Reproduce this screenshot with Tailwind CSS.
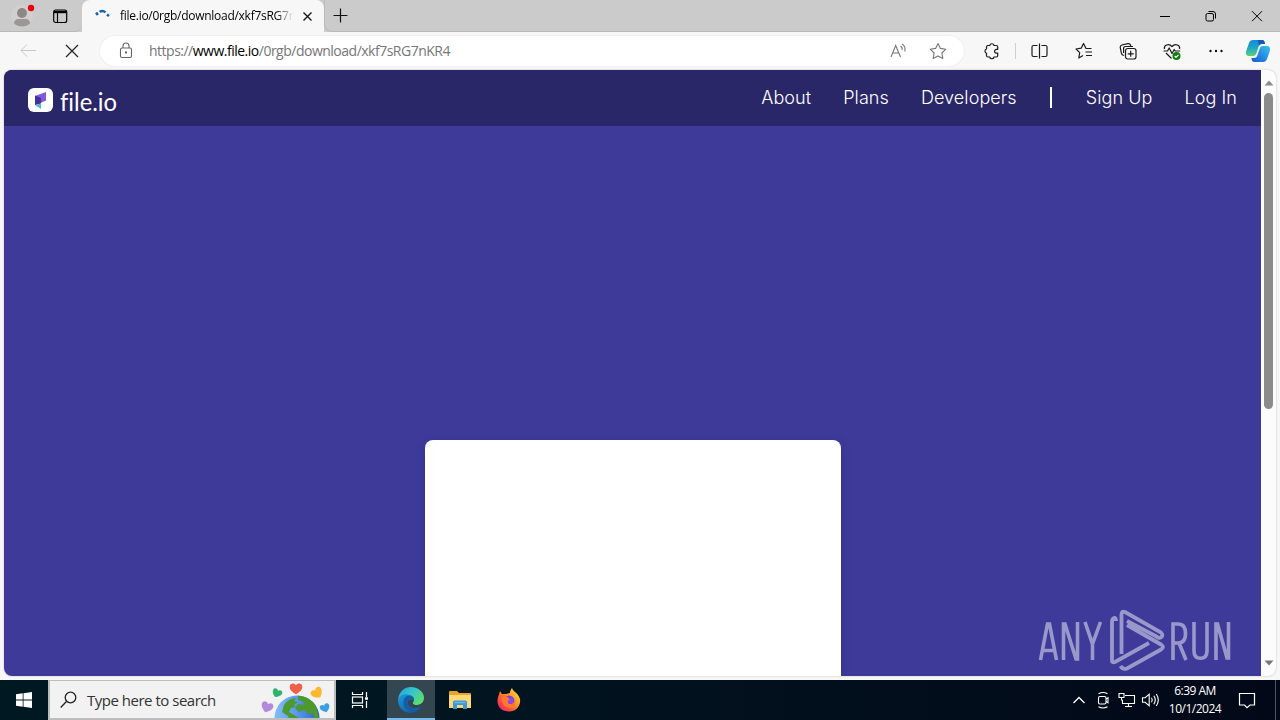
<!DOCTYPE html>
<html lang="en">
<head>
  <meta charset="UTF-8" />
  <meta name="viewport" content="width=device-width, initial-scale=1.0"/>
  <title>file.io</title>
  <script src="https://cdn.jsdelivr.net/npm/@tailwindcss/browser@4"></script>
</head>
<body class="flex h-screen w-screen flex-col overflow-hidden bg-[#f7f7f7] font-['Open_Sans','Noto_Sans',sans-serif] text-black">

  <!-- Tab strip -->
  <div class="flex h-8 shrink-0 items-stretch bg-[#cbcbcb]">
    <div class="flex w-[82px] items-center rounded-br-lg border-b border-[#b9b9b9] pl-2.5">
      <svg class="h-6 w-7 shrink-0" viewBox="10 4 28 24">
        <circle cx="22" cy="16" r="11" fill="#d2d0ce"/>
        <circle cx="22" cy="13" r="5" fill="#8c8885"/>
        <path d="M14 23.500c0-3 2-4.500 4-4.500h8c2 0 4 1.500 4 4.500-2 2-5 3-8 3s-6-1-8-3z" fill="#9b9794"/>
        <circle cx="31" cy="8" r="3.200" fill="#e3000f"/>
      </svg>
      <svg class="ml-3.5 h-4 w-4 shrink-0" viewBox="0 0 16 16" fill="none" stroke="#000" stroke-width="1.200">
        <rect x="1.700" y="2" width="13" height="12.500" rx="2"/>
        <path d="M2 4h12.500" stroke-width="2.400"/>
        <path d="M5.500 4v10"/>
      </svg>
    </div>
    <div class="flex w-[242px] items-center rounded-t-lg bg-[#f7f7f7] pl-3">
      <svg class="h-4 w-4 shrink-0" viewBox="0 0 16 16" fill="none" stroke="#1763a6">
        <path d="M2 6.500l2-1.500" stroke-width="3"/>
        <path d="M5.500 3.700c2-1 4-1 6 .6" stroke-width="2.300"/>
        <path d="M13 6.500l2 1.500" stroke-width="2.500"/>
      </svg>
      <span class="ml-2.5 w-[173px] overflow-hidden whitespace-nowrap bg-linear-to-r from-black from-90% to-transparent bg-clip-text text-xs leading-5 tracking-[-0.270px] text-transparent">file.io/0rgb/download/xkf7sRG7nKR4</span>
      <svg class="ml-2 h-3 w-3 shrink-0" viewBox="0 0 12 12" stroke="#111" stroke-width="1.300"><path d="M2.500 2.500l8 8M10.500 2.500l-8 8"/></svg>
    </div>
    <div class="flex flex-1 items-center rounded-bl-lg border-b border-l border-[#b9b9b9]">
      <svg class="ml-2 h-4 w-4" viewBox="0 0 16 16" stroke="#111" stroke-width="1.200"><path d="M.5 7.500h14M7.500.5v14"/></svg>
      <div class="ml-auto flex">
        <div class="flex w-[46px] justify-center"><svg class="h-3 w-3" viewBox="0 0 12 12" stroke="#000"><path d="M1 6.500h10"/></svg></div>
        <div class="flex w-[46px] justify-center">
          <svg class="h-3 w-3" viewBox="0 0 12 12" fill="none" stroke="#000"><rect x="1" y="3.500" width="7.500" height="7.500" rx="1.500"/><path d="M3.500 1.500H8q2.500 0 2.500 2.500v4.500"/></svg>
        </div>
        <div class="flex w-[46px] justify-center"><svg class="h-3 w-3" viewBox="0 0 12 12" stroke="#000"><path d="M1 1.200l10 10M11 1.200l-10 10"/></svg></div>
      </div>
    </div>
  </div>

  <!-- Toolbar -->
  <div class="flex h-[38px] shrink-0 items-center pl-[18px]">
    <svg class="h-5 w-5" viewBox="0 0 20 20" fill="none" stroke="#c8c8c8"><path d="M18 9.500H3M9 3.500l-6 6 6 6"/></svg>
    <svg class="ml-6 h-5 w-5" viewBox="0 0 20 20" stroke="#222" stroke-width="1.200"><path d="M4 4l12 12M16 4l-12 12"/></svg>
    <div class="ml-[18px] flex h-[30px] w-[864px] items-center rounded-full bg-white pr-4 pl-4 shadow-[0_0_2px_#0000001a]">
      <svg class="h-5 w-5 shrink-0" viewBox="0 0 20 20" fill="none" stroke="#666" stroke-width="1.100">
        <rect x="4.500" y="7" width="11" height="9.500" rx="1.500"/>
        <path d="M7 7V5a3 3 0 0 1 6 0v2"/>
        <circle cx="10" cy="11.500" r=".6" fill="#666"/>
      </svg>
      <span class="ml-[13px] whitespace-nowrap text-[14px] leading-5 tracking-[-0.500px] text-[#767676]">https://<span class="text-black">www.file.io</span>/0rgb/download/xkf7sRG7nKR4</span>
      <svg class="ml-auto h-5 w-5" viewBox="0 0 20 20" fill="none" stroke="#777" stroke-width="1.100">
        <path d="M3 16l4.700-11.500L12.500 16M4.700 12h6M12.500 5q2.200 1.500 1.500 4M14 3q4 2.500 2.800 7.500"/>
      </svg>
      <svg class="ml-5 h-5 w-5" viewBox="0 0 20 20" fill="none" stroke="#777" stroke-width="1.100" stroke-linejoin="round">
        <path d="M10 2.500l2.400 4.900 5.400.8-3.900 3.800.9 5.400-4.800-2.500-4.800 2.500.9-5.400-3.900-3.800 5.400-.8z"/>
      </svg>
    </div>
    <div class="flex flex-1 items-center pl-4 text-[#1b1b1b]">
      <svg class="ml-px h-5 w-5 shrink-0" viewBox="0 0 20 20" fill="none" stroke="currentColor" stroke-width="1.200" stroke-linejoin="round">
        <path d="M7 4.500h1.700a2.200 2.200 0 0 1 4.300 0h2.200q1.500 0 1.500 1.500v2.300h-1.200a1.900 1.900 0 0 0 0 3.800h1.200v2.400q0 1.500-1.500 1.500H13a2.200 2.200 0 0 1-4.300 0H7q-1.500 0-1.500-1.500v-2.300a2.200 2.200 0 0 1 0-4.200V6q0-1.500 1.500-1.500z"/>
      </svg>
      <div class="ml-3.5 h-4 w-px bg-[#cfcfcf]"></div>
      <svg class="ml-3.5 h-5 w-5 shrink-0" viewBox="0 0 20 20" fill="none" stroke="currentColor" stroke-width="1.200">
        <path d="M7.500 4.500h-4Q2 4.500 2 6v8q0 1.500 1.500 1.500h4M11.500 4.500h4Q17 4.500 17 6v8q0 1.500-1.500 1.500h-4M9.500 2.500v15"/>
      </svg>
      <svg class="ml-6 h-5 w-5 shrink-0" viewBox="0 0 20 20" fill="none" stroke="currentColor" stroke-width="1.200" stroke-linejoin="round">
        <path d="M17.500 7.500h-5.500L9.500 2.500 7.200 7.200 2 8l3.700 3.600-.9 5.400L9 14.600M11.500 11h6.500M12 14.500h6"/>
      </svg>
      <svg class="ml-6 h-5 w-5 shrink-0" viewBox="0 0 20 20" fill="none" stroke="currentColor" stroke-width="1.200">
        <rect x="7.500" y="7.500" width="10.500" height="10.500" rx="2.200"/>
        <path d="M12.700 9.800v6M9.700 12.800h6M6 14.500l-1.200-.5q-1-.6-1.400-2L2.200 6.500Q2 4.700 3.800 4l6-1.400q2-.4 2.600 1.400l.4 1.500M5.600 12V7.500q0-2 2-2H15"/>
      </svg>
      <svg class="ml-6 h-5 w-5 shrink-0" viewBox="0 0 20 20" fill="none" stroke="currentColor" stroke-width="1.200" stroke-linejoin="round">
        <path d="M2.500 8C1.500 4.500 6.500 1.500 10 5.500c3.500-4 8.500-1 7.500 2.500M1.500 10h4l1.700-3 2.800 5.500 2.200-4 1 1.500h5M4 12l5.500 5.500"/>
        <circle cx="14.500" cy="15" r="4" fill="#107c10" stroke="none"/>
        <path d="M12.700 15l1.300 1.400 2.500-2.600" stroke="#fff"/>
      </svg>
      <svg class="ml-6 h-5 w-5 shrink-0" viewBox="0 0 20 20" fill="#111"><circle cx="4.500" cy="10" r="1.200"/><circle cx="10" cy="10" r="1.200"/><circle cx="15.500" cy="10" r="1.200"/></svg>
      <svg class="ml-[19px] h-[26px] w-[26px] shrink-0" viewBox="0 0 26 26">
        <defs>
          <linearGradient id="cpA" x1="0" y1="0" x2="0" y2="1"><stop offset="0" stop-color="#1588d8"/><stop offset=".5" stop-color="#22a7c4"/><stop offset="1" stop-color="#5fcf78"/></linearGradient>
          <linearGradient id="cpB" x1="1" y1="0" x2="0" y2="1"><stop offset="0" stop-color="#35c5ee"/><stop offset=".6" stop-color="#2482e0"/><stop offset="1" stop-color="#1559c9"/></linearGradient>
        </defs>
        <path d="M8 2h9c2 0 2.500 1.500 3 4h-3c-2 0-3 1-3.500 3l-2 6c-.6 2-1.500 3-3.500 3H4c-3 0-3.500-2.500-2.800-5L4 5c.7-2 2-3 4-3z" fill="url(#cpA)"/>
        <path d="M18 24H9.500c-2 0-2.700-1.500-3.200-4H9c2 0 3-1 3.500-3l2-6c.6-2 1.500-3 3.500-3h4c3 0 3.500 2.500 2.800 5L22 21c-.7 2-2 3-4 3z" fill="url(#cpB)"/>
        <path d="M13 2h4c2 0 2.500 1.500 3 4h-3c-1.500 0-2.500.6-3 1.800z" fill="#1457bb"/>
      </svg>
    </div>
  </div>

  <!-- Page -->
  <div class="flex h-[610px] shrink-0 pr-1 pb-1 pl-1">
    <div class="flex flex-1 overflow-hidden rounded-lg bg-[#fcfcfc] shadow-[0_0_2px_#00000040]">
      <div class="relative flex w-[1257px] flex-col bg-[#3d3a99]">
        <header class="flex h-14 shrink-0 items-center bg-[#2a2768] pr-6 pl-6 text-white">
          <svg class="mt-1 h-6 w-[25px]" viewBox="0 0 25 24">
            <rect width="25" height="24" rx="6" fill="#fff"/>
            <path d="M7 8L18 4v8.500l-5 2.200-6 2z" fill="#8259dc"/>
            <path d="M7 7.500l6 2.500v5.500L7 17z" fill="#40349a"/>
            <path d="M7 17l6-1.500V21z" fill="#50bac5"/>
          </svg>
          <svg class="mt-1 ml-1.5 h-8 w-[62px] [font-variant-ligatures:none]" viewBox="0 0 62 32"><text x="1" y="26.500" textLength="57" lengthAdjust="spacingAndGlyphs" fill="#fff" font-family="Lato, sans-serif" font-size="24.500">file.io</text></svg>
          <nav class="ml-auto flex items-center font-['Inter',sans-serif] text-lg font-light tracking-[0.080px]">
            <a class="-mt-px">About</a>
            <a class="-mt-px ml-8">Plans</a>
            <a class="-mt-px ml-8">Developers</a>
            <div class="ml-[33px] h-[21px] w-0.5 -translate-y-px bg-white"></div>
            <a class="-mt-px ml-[34px]">Sign Up</a>
            <a class="-mt-px ml-8">Log In</a>
          </nav>
        </header>
        <main class="flex flex-1 justify-center pt-[314px]">
          <div class="w-[416px] rounded-t-lg bg-white shadow-[0_2px_8px_#2a276850]"></div>
        </main>
        <!-- Watermark -->
        <svg class="absolute right-7 bottom-1 h-[64px] w-[196px]" viewBox="0 0 196 64" fill="none" stroke="#fff" stroke-width="3.600" opacity=".48">
          <path d="M3.500 52L10.500 16h2L19.500 52M6 42.500h11M26.500 52V16h1.500L39 51h1.500V14M48 14l7.500 22L63.500 14M55.500 35v17"/>
          <path d="M79 13Q79 9.500 77 10 75 11 75 14V52.500q0 2.500 3 1.500L112 35M84.500 46V6.500q0-4 3.500-2.500L124 24.500q3 3-.5 5-2.500 1-4-1L90 13M90 17l34 19.500q4 2.500 0 5L90 60.500q-4 1.500-6.500-2.500" stroke-width="3.800"/>
          <path d="M136 52V16h5q7.500 0 7.500 9.500t-7.500 9.500h-5M142 35l7 17M157 14v29q0 7.300 6.500 7.300t6.500-7.300V14M179 52V16h1.500L190 50h1.500V14"/>
        </svg>
      </div>
      <div class="flex w-[15px] flex-col items-center pt-2">
        <svg class="h-2.5 w-2.5" viewBox="0 0 10 10"><path d="M5 2.500L9.500 7.500H.5z" fill="#8b8b8b"/></svg>
        <div class="mt-[5px] h-[316px] w-[9px] rounded-full bg-[#8b8b8b]"></div>
        <svg class="mt-auto mb-2 h-2.5 w-2.5" viewBox="0 0 10 10"><path d="M5 7.500L.5 2.500h9z" fill="#777"/></svg>
      </div>
    </div>
  </div>

  <!-- Taskbar -->
  <div class="flex h-10 items-stretch bg-linear-to-r from-[#001821] from-20% to-[#020818] text-white">
    <div class="flex w-12 items-center justify-center">
      <svg class="h-4 w-4" viewBox="0 0 16 16" fill="#fff"><path d="M0 2.300l6.700-1v6.300H0zM7.500 1.200L16 0v7.600H7.500zM0 8.400h6.700v6.300l-6.700-1zM7.500 8.400H16V16l-8.500-1.200z"/></svg>
    </div>
    <div class="flex w-72 items-center border-2 border-t border-[#bdbdbd] bg-[#f2f2f2] pl-2.5 text-[#333]">
      <svg class="h-[18px] w-[18px]" viewBox="0 0 18 18" fill="none" stroke="#222" stroke-width="1.300"><circle cx="10.500" cy="6.500" r="5.300"/><path d="M6.700 10.300L.7 16.500"/></svg>
      <span class="mt-0.5 ml-[9px] whitespace-nowrap text-[15px] tracking-[-0.490px]">Type here to search</span>
      <svg class="ml-auto h-[37px] w-[73px]" viewBox="0 0 73 37">
        <defs>
          <linearGradient id="sea" x1="0" y1="0" x2="1" y2="0"><stop offset="0" stop-color="#83bdf8"/><stop offset=".5" stop-color="#5a98ee"/><stop offset="1" stop-color="#2c66c5"/></linearGradient>
          <path id="heart" d="M0 6.500C-4 4-7 1.500-7-2c0-4 5-5 7-1.500C2-7 7-6 7-2 7 1.500 4 4 0 6.500z"/>
          <clipPath id="globe"><circle cx="36" cy="37" r="22.500"/></clipPath>
        </defs>
        <circle cx="36" cy="37" r="22.500" fill="url(#sea)"/>
        <g clip-path="url(#globe)" fill="#4c9a2d">
          <path d="M23 24q5-7 12-7l-2 3 4 1-4 3 2 2-5 1-2 4 5 3 5 3-3 4h-6l-2-6-6-4z"/>
          <path d="M37 14q12 0 18 11l3 13-5-1-1-5-5 1-4-4-5 2-4-4 3-4 5 1 1-3-6-2z"/>
        </g>
        <use href="#heart" transform="translate(6 26) rotate(20) scale(.85)" fill="#b389dc"/>
        <use href="#heart" transform="translate(16 12) rotate(25) scale(.7)" fill="#32b36b"/>
        <use href="#heart" transform="translate(35 7.500) scale(.9)" fill="#ef6048"/>
        <use href="#heart" transform="translate(56 12) rotate(-35) scale(.85)" fill="#fbb72d"/>
        <use href="#heart" transform="translate(64 27) rotate(-20) scale(.7)" fill="#3b9de2"/>
      </svg>
    </div>
    <div class="flex w-[51px] items-center justify-center pr-1">
      <svg class="h-5 w-5" viewBox="0 0 20 20" fill="none" stroke="#fff" stroke-width="1.200"><path d="M2.500 2v2.500h10V2M2.500 18v-2.500h10V18M16.500 2v5M16.500 11v7"/><rect x="2.500" y="7" width="10" height="6"/><path d="M15 8.500h3" stroke-width="2.500"/></svg>
    </div>
    <div class="flex w-12 items-center justify-center border-b-2 border-[#76b9ed] bg-[#34464f] pt-0.5">
      <svg class="h-[26px] w-[26px]" viewBox="0 0 24 24">
        <defs>
          <linearGradient id="eTop" x1="0" y1="0" x2="1" y2=".6"><stop offset="0" stop-color="#249cdd"/><stop offset=".5" stop-color="#35c4ce"/><stop offset="1" stop-color="#5bdd70"/></linearGradient>
          <linearGradient id="eLow" x1="0" y1="0" x2="1" y2="1"><stop offset="0" stop-color="#1b9de2"/><stop offset="1" stop-color="#114a8b"/></linearGradient>
        </defs>
        <path d="M0 12C1 4 6 0 12 0c7 0 12 5 12 10 0 4-3 6.500-6.500 6.500-3 0-4.500-1.300-3.500-2.500 2-3 0-6-4-6S1 9 0 12z" fill="url(#eTop)"/>
        <path d="M0 12c1-4 5-6 9-5 4 0 6 3 5.500 5-3-2-6 0-5.500 3 .5 4 6 6 12.500 3C19 22 16 24 12 24 5 24 0 19 0 12z" fill="url(#eLow)"/>
        <path d="M5 15c0-4 2-7 5-7 3 0 5 2 4.500 4-3-2-6 0-5.500 3 .5 4 6 6 12.500 3-3 5-7 5-10 4-4-1-6.500-4-6.500-7z" fill="#155da5"/>
      </svg>
    </div>
    <div class="flex w-[49px] items-center justify-center">
      <svg class="h-5 w-[22px]" viewBox="0 0 22 20">
        <path d="M0 2q0-1 1-1h7l2 2h11q1 0 1 1v14H0z" fill="#e9a52b"/>
        <path d="M0 5h22v12q0 1-1 1H1q-1 0-1-1z" fill="#fcd777"/>
        <path d="M4 19v-7q0-1.500 1.500-1.500h11q1.500 0 1.500 1.500v7h-4v-4H8v4z" fill="#3c97d8"/>
        <path d="M5.500 12.500h11" stroke="#65b7ec" stroke-width="1.500"/>
      </svg>
    </div>
    <div class="flex w-[50px] items-center justify-center">
      <svg class="h-6 w-6" viewBox="0 0 24 24">
        <defs><linearGradient id="fox" x1="1" y1="0" x2="0" y2="1"><stop offset="0" stop-color="#fff04b"/><stop offset=".4" stop-color="#ff9a22"/><stop offset=".7" stop-color="#ff4a42"/><stop offset="1" stop-color="#e31587"/></linearGradient></defs>
        <path d="M3 3l2 3 4 0 4-1c0-2 1-4 2-5 1 4 6 4 8 11 1 7-4 12.500-11 12.500S0 19 .5 12C.6 9 2 7 3 3z" fill="url(#fox)"/>
        <circle cx="12" cy="13" r="5.500" fill="#7a42dc"/>
        <path d="M5 9q4-2 7 1l3 1-4 2q-1 3 3 3 4-1 4-5 2 8-5 9-7 0-8-7z" fill="#ff7a2c"/>
        <path d="M11 11q3-3 5.500 0 .8 4-2.500 5-4 0-3-3l3-1z" fill="#8b48e6"/>
      </svg>
    </div>
    <div class="ml-auto flex items-center">
      <svg class="h-5 w-5" viewBox="0 0 20 20" fill="none" stroke="#fff" stroke-width="1.300"><path d="M4.500 13L10 7.500l5.500 5.500"/></svg>
      <svg class="ml-1 h-5 w-5" viewBox="0 0 20 20" fill="none" stroke="#fff" stroke-width="1.100"><rect x="5.500" y="6.500" width="7.500" height="7.500" rx="1.500"/><path d="M13 9l2-1.300v5L13 11.500M5.500 3.700q4.500-2.400 9 0M5.500 16.800q4.500 2.400 9 0"/></svg>
      <svg class="ml-1 h-5 w-5" viewBox="0 0 20 20" fill="none" stroke="#fff" stroke-width="1.100"><path d="M8 5.500h9.500v8H5.500V10M11.500 13.500v3M8 16.500h7M2 3.500h5v4H2zM4.500 7.500V10h1"/></svg>
      <svg class="ml-1 h-5 w-5" viewBox="0 0 20 20" fill="none" stroke="#fff" stroke-width="1.100"><path d="M1.500 7.700h2.700l4-3.500v11.600l-4-3.500H1.500zM10.500 7.700q1.600 2.300 0 4.600M12.800 5.800q3 4.200 0 8.400M15.300 4q4 6 0 12"/></svg>
      <div class="flex w-[68px] flex-col items-center text-xs leading-[18px] tracking-[-0.500px] whitespace-nowrap">
        <span>6:39 AM</span>
        <span>10/1/2024</span>
      </div>
      <svg class="ml-2 h-5 w-5" viewBox="0 0 20 20" fill="none" stroke="#fff" stroke-width="1.200"><path d="M2.500 3.500h15v11.500h-4.500l-3 2.700-2.500-2.700h-5z"/></svg>
      <div class="ml-[18px] h-10 w-px bg-[#4b5560]"></div>
      <div class="w-1"></div>
    </div>
  </div>

</body>
</html>
